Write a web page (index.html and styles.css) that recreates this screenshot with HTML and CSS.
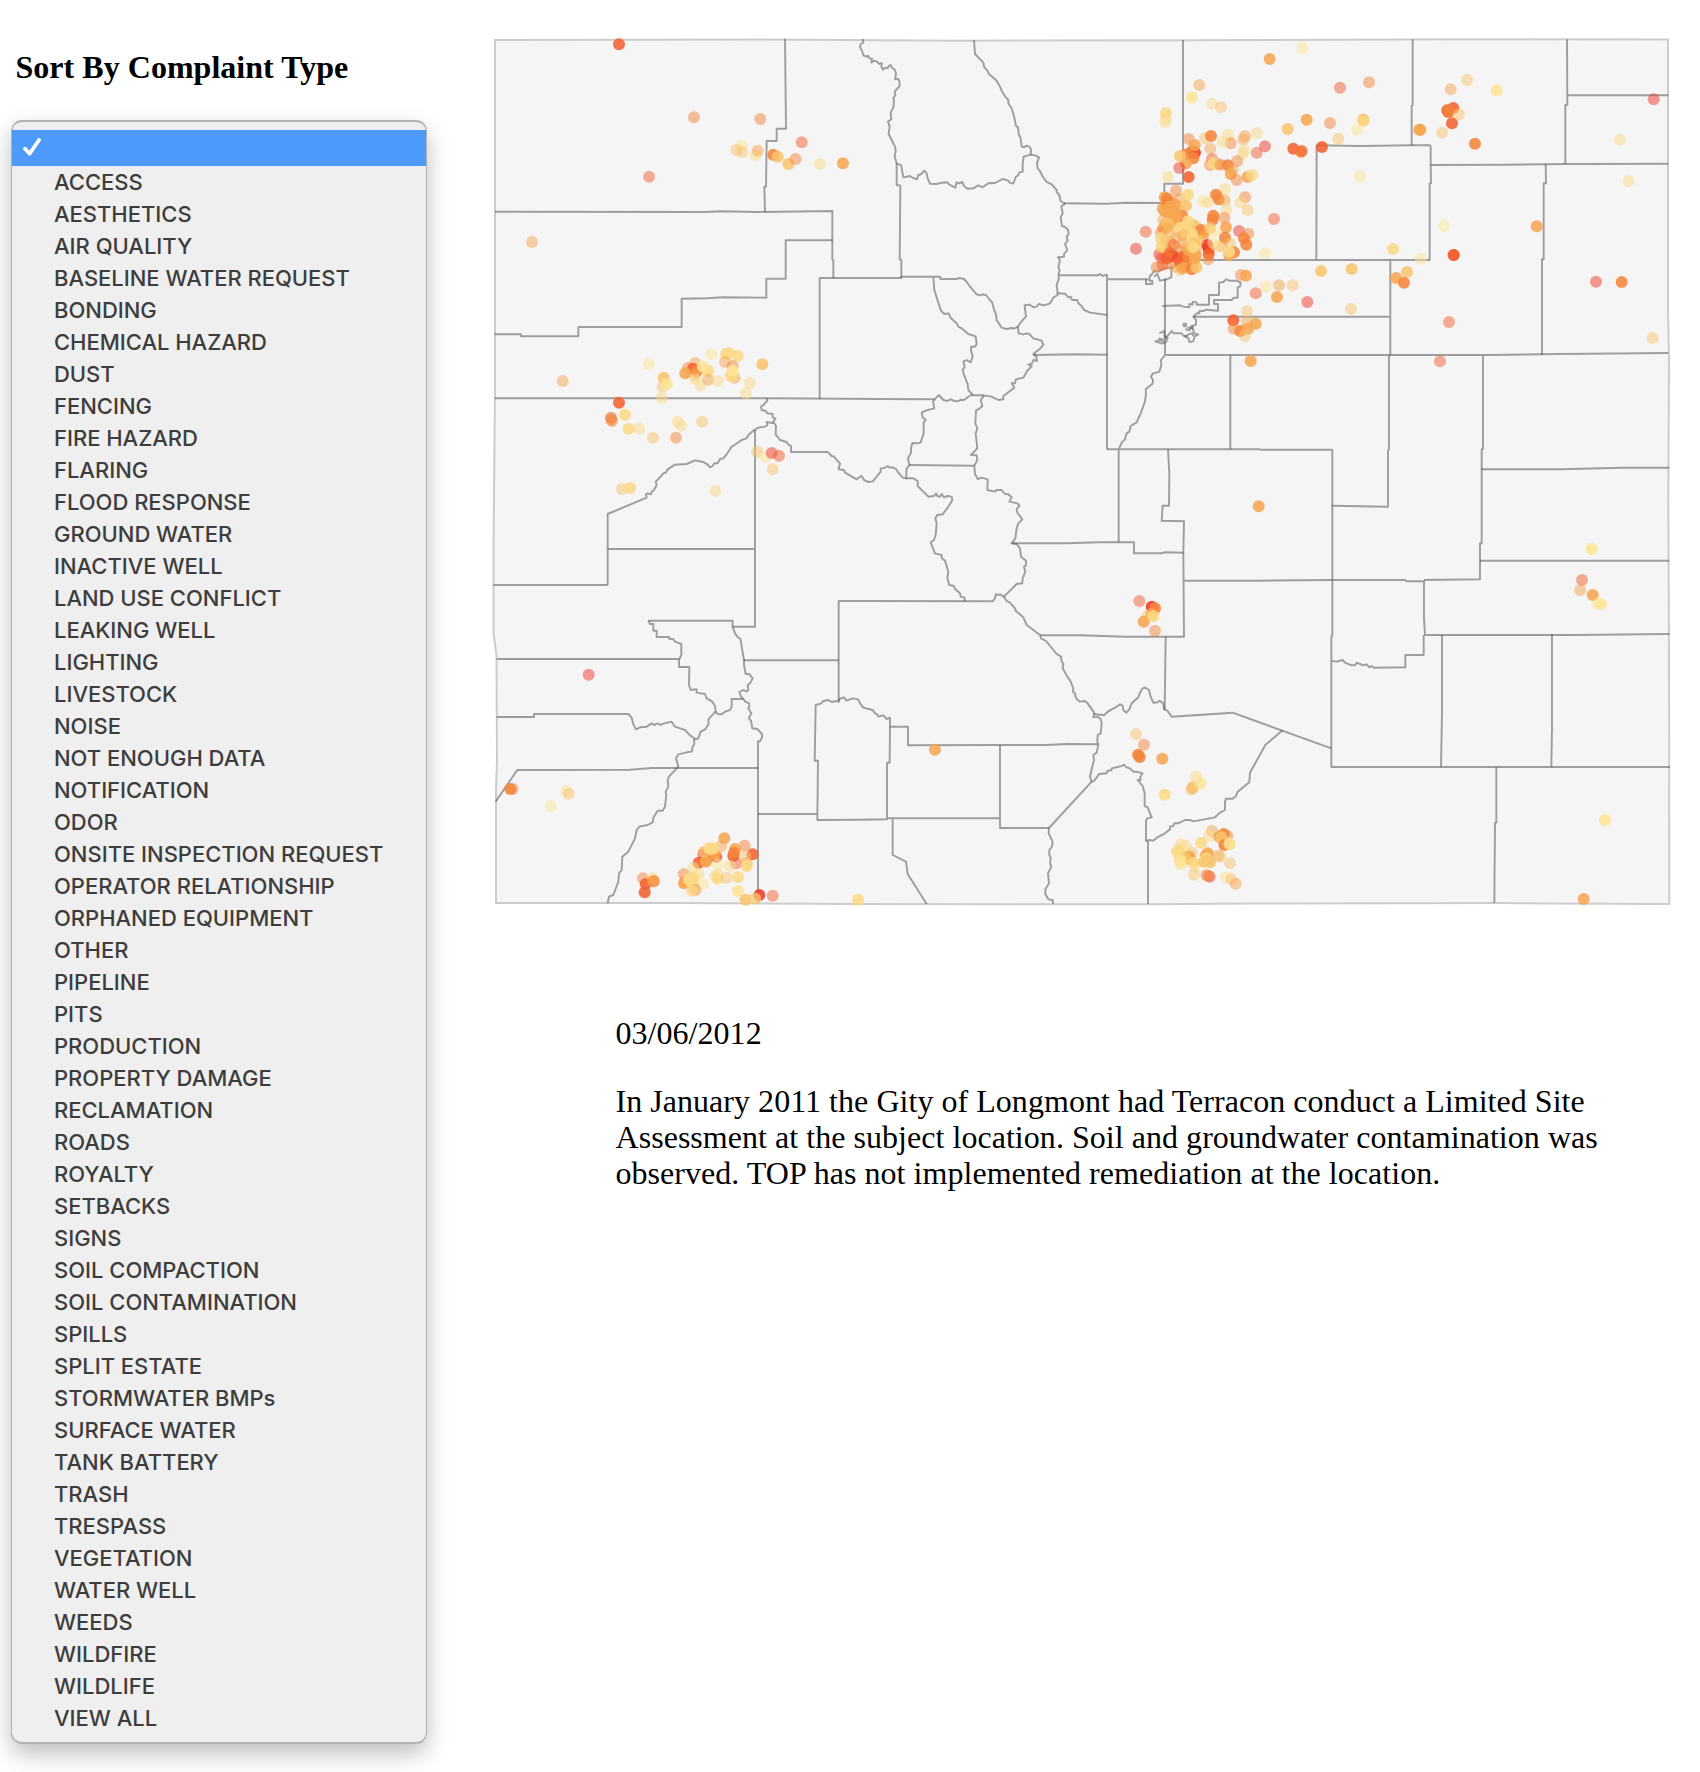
FILE: index.html
```html
<!DOCTYPE html>
<html lang="en">
<head>
<meta charset="utf-8">
<title>Complaints by Type</title>
<link rel="stylesheet" href="styles.css">
</head>
<body>
<div class="page">
  <aside class="sidebar">
    <h1 class="heading">Sort By Complaint Type</h1>
    <ul class="menu">
      <li class="menu-item selected"><svg class="check" viewBox="0 0 18 18"><path d="M2 10.8 L6.6 15.7 L16 2"/></svg></li>
      <li class="menu-item">ACCESS</li>
      <li class="menu-item">AESTHETICS</li>
      <li class="menu-item">AIR QUALITY</li>
      <li class="menu-item">BASELINE WATER REQUEST</li>
      <li class="menu-item">BONDING</li>
      <li class="menu-item">CHEMICAL HAZARD</li>
      <li class="menu-item">DUST</li>
      <li class="menu-item">FENCING</li>
      <li class="menu-item">FIRE HAZARD</li>
      <li class="menu-item">FLARING</li>
      <li class="menu-item">FLOOD RESPONSE</li>
      <li class="menu-item">GROUND WATER</li>
      <li class="menu-item">INACTIVE WELL</li>
      <li class="menu-item">LAND USE CONFLICT</li>
      <li class="menu-item">LEAKING WELL</li>
      <li class="menu-item">LIGHTING</li>
      <li class="menu-item">LIVESTOCK</li>
      <li class="menu-item">NOISE</li>
      <li class="menu-item">NOT ENOUGH DATA</li>
      <li class="menu-item">NOTIFICATION</li>
      <li class="menu-item">ODOR</li>
      <li class="menu-item">ONSITE INSPECTION REQUEST</li>
      <li class="menu-item">OPERATOR RELATIONSHIP</li>
      <li class="menu-item">ORPHANED EQUIPMENT</li>
      <li class="menu-item">OTHER</li>
      <li class="menu-item">PIPELINE</li>
      <li class="menu-item">PITS</li>
      <li class="menu-item">PRODUCTION</li>
      <li class="menu-item">PROPERTY DAMAGE</li>
      <li class="menu-item">RECLAMATION</li>
      <li class="menu-item">ROADS</li>
      <li class="menu-item">ROYALTY</li>
      <li class="menu-item">SETBACKS</li>
      <li class="menu-item">SIGNS</li>
      <li class="menu-item">SOIL COMPACTION</li>
      <li class="menu-item">SOIL CONTAMINATION</li>
      <li class="menu-item">SPILLS</li>
      <li class="menu-item">SPLIT ESTATE</li>
      <li class="menu-item">STORMWATER BMPs</li>
      <li class="menu-item">SURFACE WATER</li>
      <li class="menu-item">TANK BATTERY</li>
      <li class="menu-item">TRASH</li>
      <li class="menu-item">TRESPASS</li>
      <li class="menu-item">VEGETATION</li>
      <li class="menu-item">WATER WELL</li>
      <li class="menu-item">WEEDS</li>
      <li class="menu-item">WILDFIRE</li>
      <li class="menu-item">WILDLIFE</li>
      <li class="menu-item">VIEW ALL</li>
    </ul>
  </aside>
  <main class="content">
    <svg class="map" viewBox="480 20 1210 910">
      <path class="state" d="M495 40 L640 39.7 L760 39.5 L960 40.7 L1190 40.3 L1460 39.3 L1668 39.5 V310 L1669 360 L1668.3 500 L1669 650 L1669.3 904 L1550 903.5 L1500 903 L1250 903.5 L1150 904.3 L860 904 L680 903 L496 903 V790 L497 760 L496.5 656 L493.5 633 V550 L495 390 Z"/>
      <!-- northwest -->
      <g class="county" transform="translate(480 30) scale(.33333)">
        <path d="M45 545 L680 546 L720 544 L830 546 L1057 543 L1057 688 L1060 690 V745"/>
        <path d="M915 26 L918 296 H890 V333 H860 L858 470 H853 L855 546"/>
        <path d="M1058 631 H917 V746 H859 V803 L730 802 L680 805 L605 806 V891 H295 V919 H123 V913 H44"/>
        <path d="M1140 744 H1019 V1106"/>
      </g>
      <!-- north central -->
      <g class="county" transform="translate(860 30) scale(.33333)">
        <path d="M8 27 L10 38 L2 42 L0 52 L6 62 L10 76 L20 80 L24 77 L28 85 L36 87 L34 98 L42 92 L50 94 L56 101 L66 100 L64 108 L68 119 L75 113 L83 115 L86 108 L92 105 L95 112 L104 119 L108 130 L105 148 L113 146 L118 152 L119 168 L104 185 L106 195 L100 205 L102 215 L100 232 L92 248 L94 268 L84 275 L89 290 L86 312 L95 330 L105 350 L107 362 L104 380 L110 400 L124 406 L126 420 L130 442 L150 438 L160 444 L171 448 L175 435 L184 432 L193 422 L200 430 L203 445 L210 461 L230 462 L245 458 L262 457 L268 464 L286 473 L290 457 L298 460 L307 456 L312 468 L322 476 L340 475 L355 466 L368 472 L385 460 L405 459 L428 447 L445 452 L449 458 L460 461 L464 450 L468 440 L475 435 L478 427 L488 425 L488 400 L491 380 L512 374 L525 376 L537 382 L531 400 L533 415 L540 423 L548 440 L560 456 L575 463 L590 480 L590 486 L598 495 L602 513 L615 522"/>
        <path d="M342 30 L345 72 L370 98 L372 110 L382 122 L387 132 L410 152 L420 170 L425 182 L436 200 L445 210 L445 220 L455 235 L463 262 L468 288 L474 292 L476 312 L482 325 L485 350 L492 352 L500 347 L508 350 L513 358 L512 374"/>
        <path d="M110 400 V465 L121 467 L119 688 L124 690 V744"/>
        <path d="M615 522 L604 528 L608 550 L602 562 L606 588 L617 592 L624 600 L626 612 L620 620 L623 632 L615 642 L622 660 L612 672 L612 680 L594 682 L600 690 L595 712 L599 720 L595 735 L597 745 L590 765 L593 790"/>
        <path d="M612 520 L740 521 L800 518 L913 519"/>
        <path d="M0 744 H124 V740 H241 V747 L290 747 L298 744 L312 747 L322 758 L330 770 L350 793 L361 796 L368 793 L378 795 L390 810 L397 818 L403 842 L408 852 L410 870 L425 893 L440 897 L455 894 L462 896 L474 890"/>
        <path d="M220 742 L223 780 L234 815 L243 842 L253 852 L266 850 L273 865 L290 880 L295 890 L305 895 L325 912 L347 919 L350 942 L345 950 L333 950 L333 962 L338 980 L332 997 L320 990 L310 995 L314 1010 L308 1020 L314 1040 L323 1062 L325 1080 L337 1093 L328 1098"/>
        <path d="M474 890 L480 880 L490 868 L498 860 L494 826 L510 824 L520 832 L530 830 L536 822 L552 826 L570 820 L580 803 L593 795 V790 L615 791 L625 802 L632 800 L636 810 L652 810 L655 820 L665 828 L672 840 L690 848 L742 855"/>
        <path d="M474 890 L476 910 L490 913 L500 910 L508 912 L520 925 L545 932 L550 945 L540 956 L520 972 L529 980 L531 993 L520 990 L516 1000 L505 1004 L515 1008 L500 1025 L490 1043 L468 1048 L465 1060 L455 1060 L463 1073 L430 1098 V1108 L415 1110 L395 1100 L370 1096 H335"/>
        <path d="M520 975 L650 973 L742 974"/>
        <path d="M598 736 H715 L720 732 L728 738 L741 734 V1258 M741 748 H865"/>
      </g>
      <!-- front range and northeast -->
      <g class="county" transform="translate(1100 30) scale(.33333)">
        <path d="M249 30 V461 H193 V519"/>
        <path d="M938 28 V225 L935 228 V347"/>
        <path d="M649 346 L780 348 L935 346 H992"/>
        <path d="M650 346 L649 690 M290 690 H990 M871 690 V975 M280 860 H871"/>
        <path d="M195 745 V975 H840 M195 975 L183 990 L184 1005 L178 1025 L158 1031 L153 1040 L159 1050"/>
        <path d="M391 975 V1258 M867 975 V1050"/>
        <path d="M138 748 V762 H157 V752 H148 L150 738 L158 730 L162 722 L175 724 L190 716 L222 712 M162 740 L172 732 L180 752 L200 748 L214 742 V720 L222 706"/>
        <path d="M187 828 L240 826 L250 830 L268 832 V822 L278 824 V815 L290 817 V824 H327 V795 H357 V758 L370 756 L378 748 L388 752 H410 L422 758 L420 770 L413 772 V803 L402 803 L395 810 H342 V822 H354 V842 L320 839 L310 843 L298 843 V850 L290 850 L280 860 L288 870 L288 884 L278 888 L278 895 L262 892"/>
        <path d="M251 881 h7 v8 h-7 z M256 897 l12 4 l6 -13 l6 12 l2 10 l13 4 l-11 5 l-4 15 l-12 2 l-3 -12 l-10 -4 l13 -8 l8 -2 l4 8 M178 910 l14 -7 l2 18 l9 3 l-5 12 l-12 5 l-20 -7 l14 -4 l10 6 M176 925 l16 4"/>
        <path d="M195 924 L206 914 L215 903 L221 910 L244 910 L252 918 L260 918"/>
      </g>
      <g class="county" transform="translate(1380 30) scale(.33333)">
        <path d="M152 347 V402 L153 460 H149 V690"/>
        <path d="M152 405 L380 404 L555 402 L630 402 L865 401"/>
        <path d="M561 28 L562 225 H556 V402 M560 196 H865"/>
        <path d="M497 402 L498 460 H491 V688 H486 V975"/>
        <path d="M0 975 L330 975 L540 972 L865 969 M309 975 V1050"/>
      </g>
      <!-- west -->
      <g class="county" transform="translate(480 340) scale(.33333)">
        <path d="M45 175 H860 L1200 177 L1365 178"/>
        <path d="M860 175 L862 182 L850 195 L843 200 L845 210 L857 213 L862 220 L878 222 L878 232 L886 236 L878 248"/>
        <path d="M383 735 V522 L500 473 L498 463 L503 460 L512 463 L515 455 L522 450 L530 435 L527 425 L537 415 L550 400 L557 398 L563 388 L585 374 L620 372 L645 361 L670 366 L682 373 L690 382 L698 378 L703 370 L713 370 L720 357 L730 355 L742 340 L755 320 L768 312 L785 300 L800 295 L805 285 L820 272 L835 263 L855 260 L862 255 L860 246 L883 250 L888 258 L887 283 L900 300 L920 306 L925 314 L933 318 L933 336 L1043 336 L1055 348 L1062 350 L1070 360 L1080 370 L1076 388 L1092 390 L1095 398 L1130 418 L1140 410"/>
        <path d="M383 627 H825 M825 270 V860 H758 M40 735 H383 M1140 783 H1076 V1083"/>
      </g>
      <!-- central -->
      <g class="county" transform="translate(860 380) scale(.33333)">
        <path d="M225 58 L228 53 L237 45 L250 60 L262 63 L272 58 L283 63 L295 64 L302 59 L312 60 L328 48"/>
        <path d="M225 58 L219 64 L223 85 L210 88 L197 92 L185 98 L188 112 L197 120 L191 128 L191 160 L182 188 L170 190 L157 189 L153 205 L153 218 L144 235 L148 256 L140 265 L138 295 L128 293 L115 278 L108 267 L98 262 L90 263 L83 258 L78 262 L62 266 L62 275 L42 300 L38 304 L25 306 L12 300 L5 288 L0 290"/>
        <path d="M372 47 L362 60 L367 78 L358 86 L348 92 L346 130 L352 145 L347 160 L352 205 L333 225 L350 226 L352 240 L343 257 L345 282 L353 297 L365 293 L383 298 L382 330 L405 335 L410 330 L425 330 L435 342 L445 343 L455 352 L448 365 L472 370 L478 377 L470 388 L472 398 L487 418 L475 430 L470 445 L468 460 L466 475 L455 490 L470 492 L480 505 L483 530 L498 542 L498 555 L492 560 L496 575 L488 595 L487 610 L470 612 L432 650 L420 643 L412 645 L408 642 L405 655 L398 664 L0 663"/>
        <path d="M148 255 L343 257"/>
        <path d="M138 295 L160 295 L173 303 L173 318 L205 350 L222 348 L228 340 L232 348 L240 350 L245 342 L252 352 L262 348 L275 350 L277 360 L265 380 L248 403 L232 405 L226 415 L230 430 L227 465 L222 480 L212 487 L225 520 L245 525 L245 535 L255 542 L265 575 L262 595 L268 615 L282 618 L285 627 L300 640 L302 650 L314 653 V664"/>
        <path d="M455 490 L615 490 L720 487 L822 487 V520 L905 520 L913 517 L970 518"/>
        <path d="M741 208 H1200 M880 0 L877 12 L857 28 L858 40 L855 65 L842 100 L830 127 L812 138 L808 155 L800 160 L795 178 L785 188 L776 208 V487"/>
        <path d="M924 208 L928 280 L927 377 H908 L905 422 L972 424 L970 518 L972 770 L800 770 L660 766 H540 M970 602 H1200"/>
        <path d="M432 650 L440 663 L450 668 L465 685 L467 692 L490 712 L500 735 L540 765 L543 775 L558 783 L572 800 L590 822 L603 830 L605 845 L610 850 L608 865 L625 895 L630 900 L640 925 L639 935 L645 940 L648 955 L660 965 L675 963 L683 970 L702 997 V1002"/>
        <path d="M917 770 L914 990"/>
      </g>
      <!-- southeast -->
      <g class="county" transform="translate(1240 380) scale(.33333)">
        <path d="M447 0 V208 L444 210 V380 L275 377"/>
        <path d="M729 0 V208 H725 V490 H720 V598 L552 600"/>
        <path d="M60 209 H277 V602 L277 767 L274 769 V1161 H1290"/>
        <path d="M724 268 H960 L1150 263 H1288 M720 542 H1288"/>
        <path d="M60 602 L277 600 L495 600 L500 604 H552 V715 L555 765 L1000 765 L1288 762"/>
        <path d="M551 765 V825 H496 V862 L400 863 L395 858 L388 862 L380 853 L370 856 L360 852 L350 848 L346 855 L335 856 L315 848 L308 840 L290 845 L275 843"/>
        <path d="M606 765 V1000 L603 1161 M936 762 V1045 L934 1161 M769 1161 V1328 H765 L763 1569"/>
      </g>
      <!-- southwest -->
      <g class="county" transform="translate(480 600) scale(.33333)">
        <path d="M505 62 H758 V80 L765 100 L772 110 L782 118 L785 140 L792 180 V195 L797 222 L808 222 L818 235 L810 250 L803 255 L805 270 L800 275 L790 270 L778 276 L783 290 L790 297"/>
        <path d="M505 62 L510 72 H520 V92 H530 V111 H568 V117 H580 L585 125 L604 132 V165 L597 180 V201 H628 L627 255 L632 270 L650 268 L650 278 L675 282 L680 295 L697 305 L705 318 L707 335"/>
        <path d="M50 177 H597 M790 181 H1076"/>
        <path d="M50 351 H162 V342 H445 L455 353 L460 373 L468 388 L480 382 L500 380 L515 370 L522 375 L533 370 L540 375 L553 370 L575 365 L585 380 L600 385 L615 390 L630 406 L645 417"/>
        <path d="M707 335 L713 342 L725 343 L735 335 L750 330 L755 320 V297 H790 L795 304 L807 310 L808 320 L805 325 L814 340 L806 355 L813 362 L817 385 L832 387 L846 402 L846 412 L840 424 H834 V910"/>
        <path d="M707 335 L690 352 L685 360 L686 372 L675 388 L662 395 L655 415 L642 420 L643 432 L638 440 L635 455 L620 457 L595 463 L588 475 L595 500 L567 530 L563 540 L565 560 L557 575 L559 585 L555 620 L548 632 L533 632 L520 653 L518 667 L503 675 L478 680 L470 690 L465 715 L445 755 L427 770 L425 810 L417 820 L415 845 L400 885 L387 890 L383 910"/>
        <path d="M47 605 L112 510 L450 509 L515 504 H834"/>
        <path d="M834 642 H1012 M1140 659 L1012 660 L1014 482 H1004 L1007 315 L1022 311 L1030 303 L1045 300 L1055 306 L1070 303 L1076 306 L1078 297 L1092 292 L1100 302 L1118 295 L1135 298"/>
      </g>
      <!-- south central -->
      <g class="county" transform="translate(860 620) scale(.33333)">
        <path d="M702 282 L732 286 L745 274 L755 268 L768 262 L780 253 L788 257 L790 270 L799 278 L808 268 L815 250 L835 232 L840 218 L848 205 L855 203 L867 210 L872 230 L880 248 L893 247 L898 242 L910 250 L912 268 L922 272 L935 290 L1118 278 L1414 385"/>
        <path d="M702 282 L700 292 L712 290 L722 297 L725 310 L722 340 L713 345 L712 365 L715 375 L710 398 L700 405 L702 420 L698 435 L690 470 L695 485 L702 483 L712 470 L717 462 L740 460 L742 453 L755 450 L755 445 L785 438 L792 434 L800 442 L810 445 L820 455 L830 455 L848 460 L840 472 L842 480 L833 480 L848 498 L854 520 V558 L863 562 L875 592 L862 595 L858 602 V664"/>
        <path d="M695 485 L567 624 L566 640 L578 665 L576 680 L568 690 L568 705 L572 712 L570 730 L574 740 L564 760 L567 790 L556 808 L556 822 L565 838 L578 840 L580 852"/>
        <path d="M858 664 L867 660 L880 662 L892 652 L915 640 L930 628 L930 620 L940 618 L943 610 L955 610 L975 600 L990 600 L1000 604 L1065 592 L1080 578 L1095 570 L1095 545 L1098 536 L1118 536 L1128 528 L1133 515 L1168 487 L1170 458 L1216 375 L1268 331 M864 664 V852"/>
        <path d="M-5 238 L0 250 L10 263 L38 270 L45 280 L52 283 L55 290 L70 286 L80 297 L90 293 V320 H144 V376 L420 375 L560 375 L620 372 L713 373"/>
        <path d="M90 320 L89 428 H81 V598 L0 599 M81 595 H420 M420 375 V624 H568 M98 595 V705 L138 725 L143 762 L200 852"/>
      </g>
      <g id="complaints"></g>
    </svg>
    <section class="detail">
      <p class="date">03/06/2012</p>
      <p class="description">In January 2011 the Gity of Longmont had Terracon conduct a Limited Site Assessment at the subject location. Soil and groundwater contamination was observed. TOP has not implemented remediation at the location.</p>
    </section>
  </main>
</div>
<script src="complaints.js"></script>
</body>
</html>
```
FILE: styles.css
```css
body {
  margin: 0;
  background: #fff;
  color: #000;
  font-family: "Liberation Serif", "Times New Roman", serif;
}
.page {
  display: flex;
  height: 1772px;
  overflow: hidden;
}
.sidebar {
  flex: none;
  width: 480px;
  padding: 49px 0 0 12px;
  box-sizing: border-box;
}
.heading {
  margin: 0 0 36px 3.5px;
  font-size: 32px;
  line-height: 36px;
  font-weight: bold;
  letter-spacing: .03px;
  white-space: nowrap;
}
.menu {
  width: 414px;
  margin: 0;
  padding: 8px 0;
  box-sizing: border-box;
  list-style: none;
  background: #efefef;
  border: 1px solid #b2b2b2;
  border-width: 1px 0;
  border-radius: 10px;
  box-shadow: 0 0 0 1px #b2b2b2, 0 10px 24px rgba(0, 0, 0, .28);
  font-family: Inter, "Liberation Sans", sans-serif;
  font-size: 22px;
  font-weight: 450;
  letter-spacing: -.02px;
  color: #3d3d3d;
}
.menu-item {
  height: 32px;
  padding-left: 42px;
  line-height: 32px;
  white-space: nowrap;
}
.menu-item.selected {
  display: flex;
  align-items: center;
  height: 36px;
  padding-left: 11px;
  background: #4c9bfb;
}
.check {
  width: 18px;
  height: 18px;
  margin-top: -3px;
  fill: none;
  stroke: #fff;
  stroke-width: 3.8;
  stroke-linecap: round;
  stroke-linejoin: round;
}
.content {
  flex: none;
  width: 1210px;
  padding-top: 20px;
}
.map {
  display: block;
  width: 1210px;
  height: 910px;
}
.state {
  fill: #f5f5f5;
  stroke: #ccc;
  stroke-width: 2;
}
.county path {
  fill: none;
  stroke: #555;
  stroke-opacity: .54;
  stroke-width: 5.8;
  stroke-linejoin: round;
}
.detail {
  width: 1000px;
  margin: 85px 0 0 135.5px;
  font-size: 32px;
  line-height: 36px;
  letter-spacing: .04px;
}
.date {
  margin: 0 0 32px;
}
.description {
  margin: 0;
}
```
FILE: complaints.js
```javascript
// Each region lists "x y shade" in thirds of a pixel from its origin.
// An upper-case shade marks a spot with repeated complaints.
const shades = {
  r: "#ee3a2a", s: "#f3602f", o: "#f5853a", p: "#f6a650",
  q: "#f8c46c", y: "#fcd984", l: "#fee594"
};
const regions = [
  { origin: [480, 30], points: `417 43 S,642 262 o,841 267 o,507 440 s,965 337 s,785 347 l,769 360 q,787 366 q,827 376 y,833 362 p,880 374 O,893 380 Q,925 402 Q,947 387 o,1020 402 y,1089 400 P,156 636 p,
    506 1002 l,694 973 l,248 1053 p,738 972 Y,748 970 Y,773 978 Y,735 996 p,758 1008 o,847 1003 Q,645 999 p,624 1014 o,639 1016 S,616 1030 P,650 1024 O,684 1022 Y,668 1010 L,645 1034 p,645 1047 y,662 1067 y,684 1049 p,713 1053 y,764 1043 p,757 1030 Y,752 1038 Y,758 1022 L,810 1059 y,798 1090 y,551 1043 Q,548 1070 q,560 1062 L,545 1104 y,417 1118 S` },
  { origin: [480, 340], points: `393 233 s,396 243 o,394 238 o,435 224 Y,446 266 Y,478 266 y,519 293 q,588 293 o,593 245 y,603 257 y,666 245 q,426 447 q,450 444 Y,706 452 y,832 335 q,856 352 l,875 339 r,897 347 s,878 388 q` },
  { origin: [1130, 110], points: `104 262 P,118 275 o,150 268 p,128 278 P,98 296 P,143 300 p,150 290 q,120 320 P,133 335 p,100 330 p,150 330 p,160 345 q,125 350 q,200 350 q,220 370 P,205 375 q,100 355 P,105 400 q,120 395 p,145 365 q,170 350 q,205 410 p,165 410 q,148 440 p,175 455 P,190 460 P,150 465 P,135 470 p,110 460 o,95 445 s,112 430 s,105 420 o` },
  { origin: [1100, 30], points: `607 54 l,509 87 P,298 165 p,276 202 L,720 173 s,807 157 o,337 221 y,363 232 q,198 249 Y,196 277 y,197 265 y,620 269 P,690 279 o,790 269 P,790 272 Y,771 299 l,563 297 Q,715 326 q,958 299 P,470 310 y,435 318 p,430 328 p,384 315 y,392 340 o,368 336 y,266 327 o,315 325 q,333 318 O,495 349 r,580 356 S,603 365 O,606 362 s,666 351 S,470 368 s,433 360 y,428 372 y,331 356 p,285 368 R,278 362 S,280 385 O,262 372 O,284 345 P,258 400 P,240 378 Q,238 414 r,266 441 S,204 441 y,336 387 s,330 405 o,352 402 o,340 400 Y,362 404 o,411 394 o,383 406 O,392 432 P,398 420 p,410 450 o,443 441 P,453 436 y,458 434 y,780 439 l,375 477 y,228 482 o,264 494 Y,348 494 O,356 508 O,374 511 p,309 513 l,323 517 y,435 502 o,421 517 y,443 540 q,379 539 y,522 567 s,137 605 s,108 656 r,338 569 O,340 557 O,373 564 o,378 592 P,417 603 r,445 611 o,375 623 O,432 625 O,439 644 O,495 670 l,879 657 Y,390 641 q,365 649 p,402 667 O,388 676 P,387 665 Y,663 723 Q,755 717 Q,423 735 o,438 737 P,498 770 l,537 766 p,578 766 q,531 801 P,467 790 s,622 816 r,753 837 q,888 744 P,921 726 Q,912 758 O,441 844 q,400 871 S,401 896 o,440 876 p,421 903 O,444 896 P,467 881 P,434 918 q,452 993 P` },
  { origin: [1130, 110], points: `111 266 O,113 283 O,137 285 P,120 290 P,104 303 P,125 310 P,168 287 Q,157 318 O,130 330 P,109 343 P,141 315 P,190 345 Q,174 334 Y,151 353 Y,93 368 o,113 341 Q,93 385 Y,213 360 O,240 355 Q,253 365 l,220 380 p,173 365 Y,186 372 Y,160 375 Q,97 415 Q,88 433 r,95 410 Y,115 370 q,108 390 q,138 385 p,160 400 p,130 405 s,145 420 o,120 430 S,128 438 R,110 445 S,160 440 S,150 455 S,175 440 O,120 425 o,232 405 R,236 416 R,236 432 S,198 395 Y,205 390 q,188 411 Y,175 420 P,197 435 P,80 472 o,97 465 s,150 480 q,165 470 O,158 475 P,185 478 O,199 472 Q,195 445 P,187 380 Y,250 400 l,262 410 y,235 448 o,112 355 p,193 400 Q,188 412 Y` },
  { origin: [1380, 30], points: `261 150 q,212 178 p,350 181 L,202 241 S,205 246 S,220 234 S,206 243 O,216 280 S,237 253 q,121 299 P,186 308 q,285 341 O,821 208 r,720 329 y,746 453 y,193 588 l,470 589 P,221 675 S,221 675 S,123 686 l,648 755 r,725 756 O,207 876 s,818 924 q,180 994 s` },
  { origin: [860, 380], points: `1196 379 P,838 663 s,875 680 R,885 685 O,874 702 P,862 710 q,851 725 P,880 709 Y,885 752 o` },
  { origin: [1240, 380], points: `1055 507 L,1026 600 s,1021 631 p,1058 645 P,1073 671 l,1083 672 L` },
  { origin: [1450, 740], points: `465 240 L,401 477 P` },
  { origin: [480, 600], points: `326 224 r,98 567 o,91 567 O,258 573 l,266 581 q,213 619 l,733 715 P,724 738 p,794 737 o,765 747 P,760 768 S,762 758 O,769 790 s,818 763 S,796 768 q,750 798 y,800 790 p,800 798 Y,672 756 o,656 788 S,670 764 r,709 770 S,705 762 P,678 780 O,678 785 P,672 755 y,693 747 Y,702 745 Y,688 745 Y,640 803 y,656 822 y,714 793 l,611 822 o,615 845 O,612 850 P,640 835 Y,626 838 Y,628 840 Y,638 850 Y,669 853 l,646 870 o,638 873 y,634 870 y,705 828 y,713 836 Y,714 823 y,740 834 q,774 831 Y,774 873 L,797 899 Q,838 885 R,825 897 y,826 895 q,878 887 s,1134 899 Y,489 835 o,497 852 S,494 877 S,518 835 y,521 844 O,520 842 p` },
  { origin: [860, 620], points: `225 389 P,828 342 q,852 374 o,834 404 O,839 411 O,907 416 P,1008 470 y,995 508 p,998 502 Q,1021 490 L,914 524 Y,1056 633 p,1048 648 y,1091 642 O,1102 648 o,1078 650 P,1085 652 Q,1093 675 O,1109 672 Y,1108 670 l,1023 669 Y,962 673 y,978 678 y,957 690 Y,951 695 Y,970 705 Y,996 698 q,988 710 P,990 718 P,975 715 Q,960 718 Y,963 733 y,962 723 L,961 725 l,1001 728 Y,1005 738 y,1002 764 q,1043 700 P,1037 707 P,1050 727 Q,1032 725 Q,1038 715 Y,1040 720 Q,1075 707 p,1080 710 q,1110 730 q,1049 770 r,1039 765 o,1045 768 o,1098 771 l,1114 778 q,1127 791 p` }
];
const layer = document.getElementById("complaints");
for (const { origin: [ox, oy], points } of regions) {
  for (const point of points.split(",")) {
    const [x, y, shade] = point.trim().split(" ");
    const dot = document.createElementNS("http://www.w3.org/2000/svg", "circle");
    dot.setAttribute("cx", (ox + x / 3).toFixed(1));
    dot.setAttribute("cy", (oy + y / 3).toFixed(1));
    dot.setAttribute("r", 6);
    dot.setAttribute("fill", shades[shade.toLowerCase()]);
    dot.setAttribute("fill-opacity", shade === shade.toLowerCase() ? 0.5 : 0.87);
    layer.appendChild(dot);
  }
}
```
